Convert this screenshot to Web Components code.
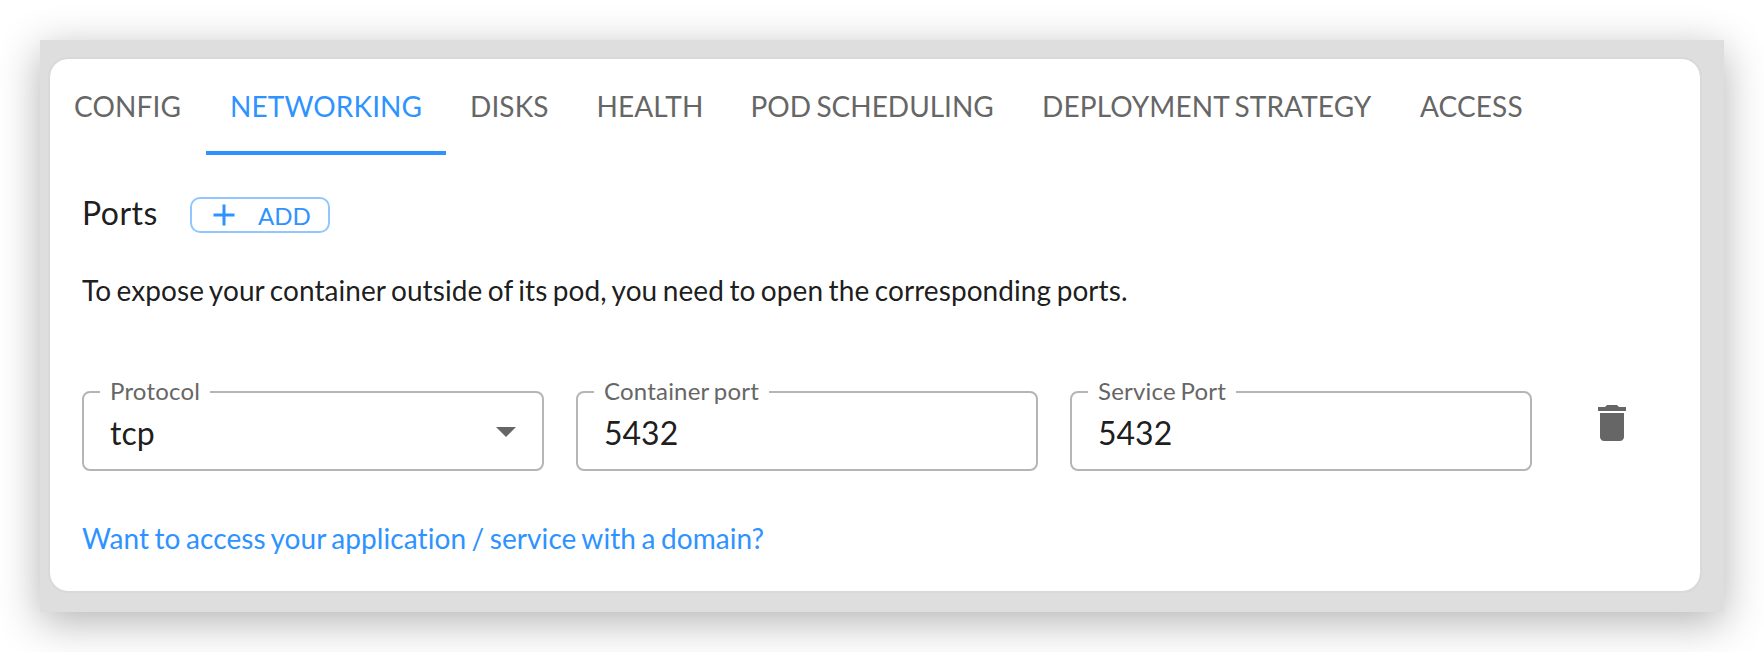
<!DOCTYPE html>
<html lang="en"><head><meta charset="utf-8"><title>Networking</title>
<style>
html,body{margin:0;background:#fff}
body{width:1764px;height:652px;overflow:hidden;box-sizing:border-box;padding:40px;font-family:Lato,"Liberation Sans",sans-serif;font-variant-ligatures:none;color:rgba(0,0,0,.9)}
</style></head><body>
<settings-frame>
  <tab-strip slot="tabs">
    <tab-item style="width:156px">CONFIG</tab-item><tab-item selected style="width:240px">NETWORKING</tab-item><tab-item style="width:126.500px">DISKS</tab-item><tab-item style="width:154px">HEALTH</tab-item><tab-item style="width:291.500px;letter-spacing:0">POD SCHEDULING</tab-item><tab-item style="width:378px">DEPLOYMENT STRATEGY</tab-item><tab-item>ACCESS</tab-item>
  </tab-strip>
  <ports-panel>
    <span slot="title">Ports</span>
    <add-button slot="action">ADD</add-button>
    <span slot="description">To expose your container outside of its pod, you need to open the corresponding ports.</span>
    <port-row>
      <outlined-field label="Protocol" select>tcp</outlined-field>
      <outlined-field label="Container port">5432</outlined-field>
      <outlined-field label="Service Port">5432</outlined-field>
      <delete-button></delete-button>
    </port-row>
    <span slot="link">Want to access your application / service with a domain?</span>
  </ports-panel>
</settings-frame>
<script>
const define=(name,html)=>customElements.define(name,class extends HTMLElement{
  constructor(){super();this.attachShadow({mode:'open'}).innerHTML=typeof html==='function'?'':html;}
  connectedCallback(){if(typeof html==='function')this.shadowRoot.innerHTML=html(this);}
});
define('settings-frame',`<style>
:host{display:block;box-sizing:border-box;width:1684px;height:572px;padding:17px 22px 19px 8px;background:#dedede;box-shadow:0 10px 40px rgba(0,0,0,.3)}
.card{box-sizing:border-box;height:536px;border:2px solid #d9d9d9;border-radius:20px;background:#fff;background-clip:padding-box}
</style><div class="card"><slot name="tabs"></slot><slot></slot></div>`);
define('tab-strip',`<style>:host{display:flex;height:96px}</style><slot></slot>`);
define('tab-item',`<style>
:host{display:flex;flex:none;box-sizing:border-box;height:96px;padding:2px 0 0 24px;align-items:center;font-size:28px;line-height:34px;letter-spacing:.12px;word-spacing:-1.8px;white-space:nowrap;color:#666;border-bottom:4px solid transparent}
:host([selected]){color:#2e93ff;border-color:#2e93ff}
</style><slot></slot>`);
define('ports-panel',`<style>
:host{display:block;padding:38px 32px 0}
.head{display:flex;height:44px;align-items:center;gap:32px}
.title{box-sizing:border-box;width:76px;height:44px;font-size:32px;line-height:40px;letter-spacing:.45px}
.desc{font-size:28px;line-height:40px;margin-top:33px}
.desc,.link{letter-spacing:.07px;word-spacing:-1.75px}
.row{margin-top:66px}
.link{font-size:28px;line-height:40px;margin-top:47px;color:#2e93ff}
</style>
<div class="head"><div class="title"><slot name="title"></slot></div><slot name="action"></slot></div>
<div class="desc"><slot name="description"></slot></div>
<div class="row"><slot></slot></div>
<div class="link"><slot name="link"></slot></div>`);
define('add-button',`<style>
:host{display:flex;box-sizing:border-box;width:140px;height:36px;border:2px solid #90c7ff;border-radius:10px;align-items:center;padding-left:14px;gap:16px;color:#2e93ff;font-size:24px;line-height:32px}
svg{width:36px;height:36px;fill:currentColor;flex:none}
span{padding-top:2px}
</style><svg viewBox="0 0 24 24"><path d="M19 13h-6v6h-2v-6H5v-2h6V5h2v6h6v2z"/></svg><span><slot></slot></span>`);
define('port-row',`<style>:host{display:flex;gap:32px;align-items:flex-start}</style><slot></slot>`);
define('outlined-field',el=>`<style>
:host{display:block;width:462px;height:95px}
fieldset{box-sizing:border-box;margin:0;min-width:0;width:462px;height:95px;border:2px solid #b5b5b5;border-radius:8px;padding:0 26px 0 16px}
legend{font-size:24px;line-height:30px;height:32px;padding:0 10px;color:#666;letter-spacing:.2px;word-spacing:-1.6px}
.value{box-sizing:border-box;display:flex;align-items:center;justify-content:space-between;padding:0 0 4px 10px;height:53px;font-size:32px;line-height:38px}
svg{width:20px;height:10px;fill:#666;margin-top:-1px}
</style><fieldset><legend>${el.getAttribute('label')}</legend><div class="value"><span><slot></slot></span>${el.hasAttribute('select')?'<svg viewBox="0 0 20 10"><path d="M0 0h20L10 10z"/></svg>':''}</div></fieldset>`);
define('delete-button',`<style>
:host{display:block;margin:23px 0 0 24px;width:48px;height:48px}
svg{display:block;width:48px;height:48px;fill:#666}
</style><svg viewBox="0 0 24 24"><path d="M6 19c0 1.100.9 2 2 2h8c1.100 0 2-.9 2-2V7H6v12zM19 4h-3.500l-1-1h-5l-1 1H5v2h14V4z"/></svg>`);
</script></body></html>
